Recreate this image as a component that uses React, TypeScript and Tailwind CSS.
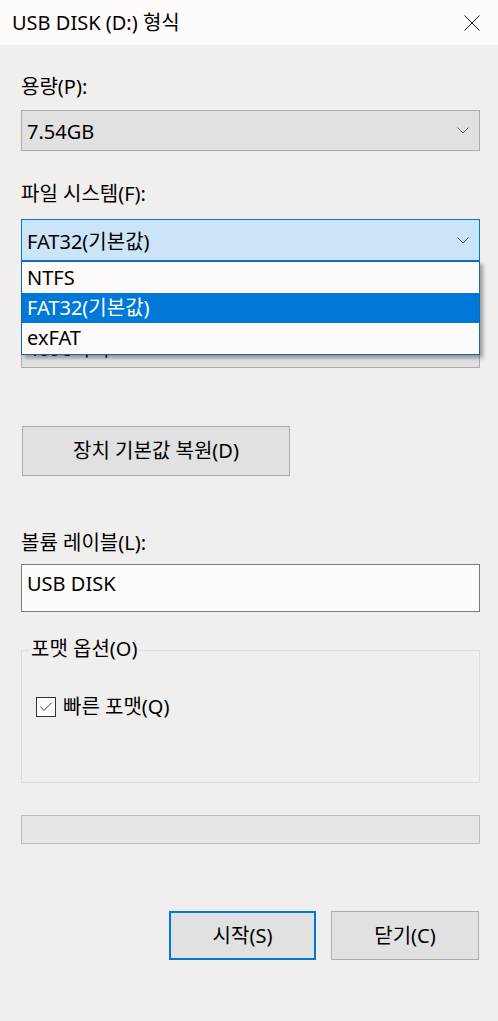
import { Check } from 'lucide-react';

const font = 'font-["Noto_Sans","Noto_Sans_CJK_KR",sans-serif]';

function Chevron() {
  return (
    <svg width="12" height="7" viewBox="0 0 12 7" className="shrink-0">
      <path d="M0.5 0.5 L6 6 L11.5 0.5" fill="none" stroke="#5a5a5a" strokeWidth="1" />
    </svg>
  );
}

function Combo({ value, active }: { value: string; active?: boolean }) {
  return (
    <div
      className={
        active
          ? 'h-[42px] border border-[#0078d7] bg-[#cce4f7] flex items-center justify-between pl-[5px] pr-[10px]'
          : 'h-[41px] border border-[#adadad] bg-[#e1e1e1] flex items-center justify-between pl-[5px] pr-[10px]'
      }
    >
      <span className="pt-[3px] text-[20px] leading-[28px] text-black">{value}</span>
      <Chevron />
    </div>
  );
}

export default function App() {
  const options = ['NTFS', 'FAT32(기본값)', 'exFAT'];
  const selected = 1;

  return (
    <div className={`w-[498px] h-[1021px] bg-[#f0efee] text-black ${font}`}>
      <div className="h-[45px] bg-[#fefbfa] flex items-center justify-between pl-[12px] pr-[18px]">
        <span className="text-[20px] leading-[28px] pt-[1px]">USB DISK (D:) 형식</span>
        <svg width="16" height="16" viewBox="0 0 16 16">
          <path d="M0.5 0.5 L15.5 15.5 M15.5 0.5 L0.5 15.5" stroke="#111" strokeWidth="1" />
        </svg>
      </div>

      <div className="relative px-[21px] pr-[18px] flex flex-col">
        <div className="mt-[28px] text-[20px] leading-[28px]">용량(P):</div>
        <div className="mt-[9px]">
          <Combo value="7.54GB" />
        </div>

        <div className="mt-[29px] text-[20px] leading-[28px]">파일 시스템(F):</div>
        <div className="mt-[11px] relative">
          <Combo value="FAT32(기본값)" active />
          {/* open dropdown list */}
          <ul className="absolute left-0 right-0 top-[42px] z-10 border border-[#1565b0] bg-[#fefbfa] shadow-[3px_3px_4px_rgba(0,0,0,0.35)] py-[1px]">
            {options.map((o, i) => (
              <li
                key={o}
                className={
                  i === selected
                    ? 'h-[30px] pl-[5px] text-[20px] leading-[30px] bg-[#0078d7] text-white'
                    : 'h-[30px] pl-[5px] text-[20px] leading-[30px] text-black'
                }
              >
                {o}
              </li>
            ))}
          </ul>
        </div>

        {/* covered by the open list */}
        <div className="invisible mt-[28px] text-[20px] leading-[28px]">할당 단위 크기(A):</div>
        <div className="mt-[10px]">
          <Combo value="4096바이트" />
        </div>

        <button className="mt-[58px] ml-[1px] w-[268px] h-[50px] border border-[#adadad] bg-[#e1e1e1] text-[20px] leading-[28px]">
          장치 기본값 복원(D)
        </button>

        <div className="mt-[53px] text-[20px] leading-[28px]">볼륨 레이블(L):</div>
        <div className="mt-[7px] h-[48px] border border-[#7a7a7a] bg-[#fefbfa] pl-[5px] pt-[5px] text-[20px] leading-[28px]">
          USB DISK
        </div>

        <div className="relative mt-[38px] h-[133px] border border-[#dcdcdc]">
          <span className="absolute left-[7px] -top-[16px] px-[2px] bg-[#f0efee] text-[20px] leading-[28px]">
            포맷 옵션(O)
          </span>
          <div className="mt-[42px] ml-[14px] flex items-center gap-[7px]">
            <span className="w-[20px] h-[20px] border border-[#333] bg-[#fefbfa] flex items-center justify-center">
              <Check size={16} strokeWidth={1.5} color="#444" />
            </span>
            <span className="text-[20px] leading-[28px]">빠른 포맷(Q)</span>
          </div>
        </div>

        <div className="mt-[32px] h-[29px] border border-[#bcbcbc] bg-[#e6e6e6]" />

        <div className="mt-[67px] flex justify-end gap-[15px] mr-[1px]">
          <button className="w-[147px] h-[49px] border-2 border-[#0078d7] bg-[#e1e1e1] text-[20px] leading-[28px]">
            시작(S)
          </button>
          <button className="w-[148px] h-[49px] border border-[#adadad] bg-[#e1e1e1] text-[20px] leading-[28px]">
            닫기(C)
          </button>
        </div>
      </div>
    </div>
  );
}
